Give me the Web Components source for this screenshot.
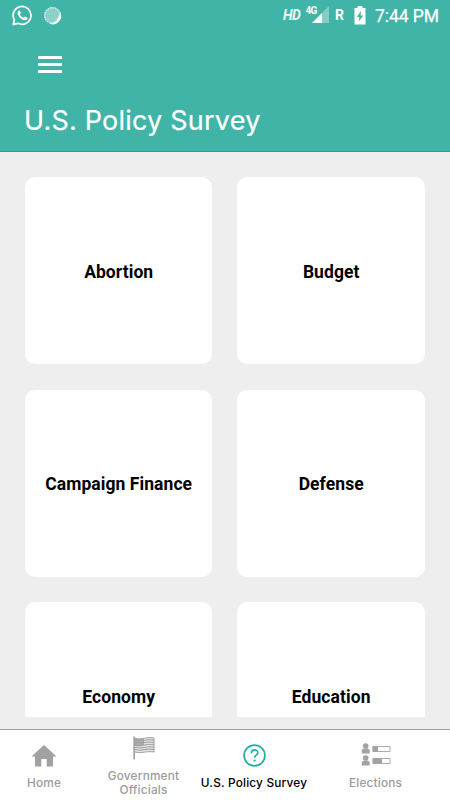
<!DOCTYPE html>
<html lang="en">
<head>
<meta charset="utf-8">
<title>U.S. Policy Survey</title>
<style>
    body {
        margin: 0;
        font-family: Inter, "Liberation Sans", sans-serif;
    }
</style>
</head>
<body>
<policy-app></policy-app>

<script>
class StatusBar extends HTMLElement {
    constructor() {
        super();
        const shadow = this.attachShadow({ mode: "open" });

        shadow.innerHTML = `
        <style>
        :host {
            display: flex;
            justify-content: space-between;
            height: 30px;
            padding: 0 11px 0 12px;
            color: #fff;
            font-family: Roboto, sans-serif;
        }

        div {
            display: flex;
            align-items: center;
        }

        svg {
            display: block;
        }

        .left {
            gap: 10px;
        }

        .hd {
            font-size: 14px;
            font-weight: 700;
            font-style: italic;
            letter-spacing: -0.5px;
            margin-right: 5px;
            opacity: 0.9;
        }

        .signal {
            align-items: flex-start;
            height: 18px;
            margin-right: 6px;
        }

        .net {
            font-size: 10px;
            line-height: 9px;
            font-weight: 700;
            letter-spacing: -0.5px;
            margin-right: -6px;
        }

        .roam {
            font-size: 14px;
            font-weight: 700;
            width: 19px;
        }

        .time {
            font-size: 17.5px;
            letter-spacing: -0.05px;
            margin-left: 9px;
            padding-top: 1px;
            -webkit-text-stroke: 0.25px #fff;
        }
        </style>
        <div class="left">
            <svg width="21" height="21" viewBox="0 0 21 21">
                <path d="M1.200 19.600 2.400 14.900A8.900 8.900 0 1 1 6 18.300Z" fill="none" stroke="#fff" stroke-width="1.800" stroke-linejoin="round"/>
                <path d="M7.400 5.500c-.8 0-1.800 1-1.800 2.400 0 3 4 7.300 7.400 7.300 1.300 0 2.500-.9 2.500-2 0-.5-.2-.6-2.500-1.700-.6-.2-.9.9-1.500 1.200-1.200-.3-3-1.900-3.600-3.200.3-.6 1-.9.8-1.500L8 5.800C7.900 5.600 7.700 5.500 7.400 5.500Z" fill="#fff"/>
            </svg>
            <svg width="19" height="19" viewBox="0 0 19 19">
                <circle cx="9.500" cy="9.500" r="8.500" fill="#8cd2c9"/>
                <circle cx="9.500" cy="9.500" r="7.700" fill="none" stroke="#d3eeea" stroke-width="1.600" stroke-dasharray="1.200 1.200"/>
                <path d="M17.300 6.500A8.300 8.300 0 0 1 7 17.700C12 17.200 15.500 13.500 17.300 6.500Z" fill="#fff" stroke="#fff" stroke-width=".4"/>
            </svg>
        </div>
        <div>
            <span class="hd">HD</span>
            <div class="signal">
                <span class="net">4G</span>
                <svg width="18" height="18" viewBox="0 0 18 18">
                    <path d="M18 0V17H1Z" fill="#83cec4"/>
                    <path d="M11 7V17H1Z" fill="#fff"/>
                </svg>
            </div>
            <span class="roam">R</span>
            <svg width="12" height="19" viewBox="0 0 12 19">
                <path d="M3.500 0h5v2H11.500V18.500H.5V2h3Z" fill="#fff"/>
                <path d="M7 5 2.800 11H5.400L4.800 15.500 9.200 9.400H6.600Z" fill="#3fb4a7"/>
            </svg>
            <span class="time">7:44 PM</span>
        </div>
        `;
    }
}

class AppHeader extends HTMLElement {
    constructor() {
        super();
        const shadow = this.attachShadow({ mode: "open" });

        shadow.innerHTML = `
        <style>
        :host {
            display: block;
            box-sizing: border-box;
            height: 152px;
            background-color: #3fb4a7;
            border-bottom: 1px solid #1fa695;
            color: #fff;
        }

        .menu {
            display: grid;
            gap: 4px;
            width: 24px;
            margin: 26px 0 0 38px;
        }

        .menu span {
            height: 3px;
            background-color: #fff;
        }

        h1 {
            margin: 31px 0 0 24px;
            font-size: 27px;
            line-height: 34px;
            font-weight: 400;
            letter-spacing: 0.22px;
            white-space: nowrap;
            -webkit-text-stroke: 0.2px #fff;
        }
        </style>
        <status-bar></status-bar>
        <div class="menu"><span></span><span></span><span></span></div>
        <h1><slot></slot></h1>
        `;
    }
}

class TopicCard extends HTMLElement {
    constructor() {
        super();
        const shadow = this.attachShadow({ mode: "open" });

        shadow.innerHTML = `
        <style>
        :host {
            display: flex;
            align-items: center;
            justify-content: center;
            box-sizing: border-box;
            padding-top: 2px;
            background-color: #fff;
            border-radius: 10px;
            color: #000;
            font: 700 17.5px Roboto, sans-serif;
            letter-spacing: 0.07px;
            white-space: nowrap;
        }
        </style>
        <slot></slot>
        `;
    }
}

class TopicGrid extends HTMLElement {
    constructor() {
        super();
        const shadow = this.attachShadow({ mode: "open" });

        shadow.innerHTML = `
        <style>
        :host {
            display: grid;
            box-sizing: border-box;
            height: 564.5px;
            padding: 25.2px 25px 0;
            grid-template-columns: 187.4px 187.6px;
            grid-auto-rows: 187.2px;
            gap: 25.2px 25px;
            overflow: hidden;
        }
        </style>
        <slot></slot>
        `;
    }
}

const tabIcons = {
    home: `<svg width="26" height="22" viewBox="0 0 26 22">
        <path d="M13 0 25.500 11.500H22V21.500H15.700V14H10.300V21.500H4V11.500H.5Z" fill="#a3a1a2"/>
    </svg>`,
    flag: `<svg width="22" height="24" viewBox="0 0 22 24">
        <path d="M1.200.5V23.500" stroke="#a3a1a2" stroke-width="1.700"/>
        <path d="M2 2.200C8 4.500 12 .5 21 2V16C13 14.500 10 18 2 16Z" fill="#e2e1e1"/>
        <g fill="none" stroke="#a3a1a2" stroke-width="1">
            <path d="M2 2.200C8 4.500 12 .5 21 2V16C13 14.500 10 18 2 16"/>
            <path d="M11 4.500C14 3.600 17 3.700 21 4.300M11 6.800C14 5.900 17 6 21 6.600M11 9.200C14 8.200 17 8.300 21 8.900M2 11.500C9 13 13 10 21 11.200M2 13.700C9 15.300 13 12.200 21 13.500"/>
        </g>
        <path d="M2 2.500C6 3.700 8 2.800 11 2.300V9.500C8 10.500 5 10.700 2 9.800Z" fill="#a3a1a2"/>
        <path d="M4 5h6M4 8h6" stroke="#d5d4d4" stroke-width=".7" stroke-dasharray="1 1.300"/>
    </svg>`,
    survey: `<svg width="23" height="23" viewBox="0 0 23 23">
        <circle cx="11.500" cy="11.500" r="10.400" fill="none" stroke="#24b1a0" stroke-width="1.700"/>
        <path d="M8.400 9.200C8.400 4.900 14.800 5 14.800 8.700 14.800 11.200 11.600 11.200 11.600 13.800" fill="none" stroke="#24b1a0" stroke-width="1.700"/>
        <circle cx="11.600" cy="16.600" r="1.150" fill="#24b1a0"/>
    </svg>`,
    elections: `<svg width="30" height="24" viewBox="0 0 30 24">
        <defs>
            <g id="row">
                <circle cx="4.700" cy="3" r="2.800"/>
                <path d="M.7 10.500V7.600C.7 6.500 1.500 6 3 5.400H6.400C8 6 8.700 6.500 8.700 7.600V10.500Z"/>
                <path d="M12 3.500H29V8.500H12Z" fill="none" stroke="#a3a1a2" stroke-width=".9"/>
            </g>
        </defs>
        <g fill="#a3a1a2">
            <use href="#row"/>
            <use href="#row" y="12"/>
            <path d="M11.700 3.300H17V8.800H11.700ZM11.700 15.300H21V20.800H11.700Z"/>
        </g>
    </svg>`
};

class TabItem extends HTMLElement {
    constructor() {
        super();
        const shadow = this.attachShadow({ mode: "open" });

        shadow.innerHTML = `
        <style>
        :host {
            display: flex;
            flex-direction: column;
            align-items: center;
            justify-content: flex-end;
            gap: 9px;
            height: 60px;
            color: #9b9b9b;
            font-size: 11.8px;
            line-height: 14px;
            font-weight: 500;
            letter-spacing: 0.2px;
            text-align: center;
            white-space: nowrap;
        }

        :host([icon="flag"]) {
            height: 67px;
        }

        :host([active]) {
            color: #000;
        }

        svg {
            display: block;
        }
        </style>
        ${tabIcons[this.getAttribute("icon")]}
        <span><slot></slot></span>
        `;
    }
}

class TabBar extends HTMLElement {
    constructor() {
        super();
        const shadow = this.attachShadow({ mode: "open" });

        shadow.innerHTML = `
        <style>
        :host {
            display: grid;
            box-sizing: border-box;
            grid-template-columns: 88px 111px 110px 133px;
            height: 71px;
            background-color: #fff;
            border-top: 1px solid #a0a0a0;
        }
        </style>
        <slot></slot>
        `;
    }
}

class PolicyApp extends HTMLElement {
    constructor() {
        super();
        const shadow = this.attachShadow({ mode: "open" });

        shadow.innerHTML = `
        <style>
        :host {
            display: flex;
            flex-direction: column;
            justify-content: space-between;
            height: 800px;
            overflow: hidden;
            background-color: #eee;
        }
        </style>
        <div>
            <app-header>U.S. Policy Survey</app-header>
            <topic-grid>
                <topic-card>Abortion</topic-card>
                <topic-card>Budget</topic-card>
                <topic-card>Campaign Finance</topic-card>
                <topic-card>Defense</topic-card>
                <topic-card>Economy</topic-card>
                <topic-card>Education</topic-card>
            </topic-grid>
        </div>
        <tab-bar>
            <tab-item icon="home">Home</tab-item>
            <tab-item icon="flag">Government<br>Officials</tab-item>
            <tab-item icon="survey" active>U.S. Policy Survey</tab-item>
            <tab-item icon="elections">Elections</tab-item>
        </tab-bar>
        `;
    }
}

customElements.define("status-bar", StatusBar);
customElements.define("app-header", AppHeader);
customElements.define("topic-card", TopicCard);
customElements.define("topic-grid", TopicGrid);
customElements.define("tab-item", TabItem);
customElements.define("tab-bar", TabBar);
customElements.define("policy-app", PolicyApp);
</script>
</body>
</html>
